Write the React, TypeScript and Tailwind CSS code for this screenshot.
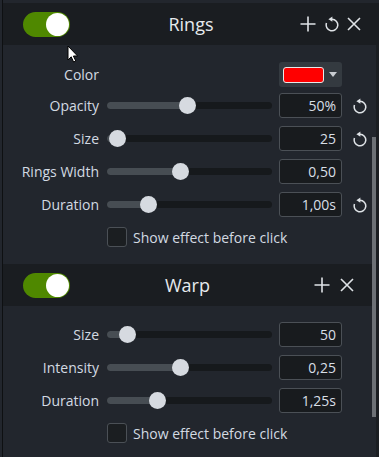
const font = { fontFamily: '"Open Sans", "Liberation Sans", sans-serif' };

function Toggle() {
  return (
    <div className="w-[47px] h-[25px] rounded-full bg-[#4f8800] flex items-center justify-end pr-px">
      <div className="w-[23px] h-[23px] rounded-full bg-white" />
    </div>
  );
}

function PlusIcon() {
  return (
    <svg width="16" height="16" viewBox="0 0 16 16" fill="none" stroke="#dfe3e7" strokeWidth="1.6">
      <path d="M8 0.5v15M0.5 8h15" />
    </svg>
  );
}

function CloseIcon() {
  return (
    <svg width="16" height="16" viewBox="0 0 16 16" fill="none" stroke="#dfe3e7" strokeWidth="1.6">
      <path d="M2 2l12 12M14 2L2 14" />
    </svg>
  );
}

function ResetIcon() {
  return (
    <svg width="16" height="16" viewBox="0 0 16 16" fill="none">
      <path d="M8 3.2A5.8 5.8 0 1 1 2.5 7.1" stroke="#dfe3e7" strokeWidth="1.5" />
      <path d="M4.4 3.2L8.4 0.6v5.2z" fill="#dfe3e7" />
    </svg>
  );
}

function Header({ title, reset }: { title: string; reset?: boolean }) {
  return (
    <div className="h-[42px] bg-[#1a1d21] grid grid-cols-[1fr_auto_1fr] items-center">
      <div className="pl-[20px]">
        <Toggle />
      </div>
      <div className="text-[18px] text-[#e6eaee]">{title}</div>
      <div className="flex items-center justify-end pr-[17px]">
        {reset ? (
          <>
            <PlusIcon />
            <div className="ml-[8px]">
              <ResetIcon />
            </div>
            <div className="ml-[6px]">
              <CloseIcon />
            </div>
          </>
        ) : (
          <>
            <PlusIcon />
            <div className="ml-[9px]">
              <CloseIcon />
            </div>
          </>
        )}
      </div>
    </div>
  );
}

function Slider({ pos }: { pos: number }) {
  // pos = thumb centre, px from the track's left edge
  return (
    <div className="relative w-[165px] h-[17px] flex items-center">
      <div className="w-full h-[7px] rounded-full bg-[#16191c] overflow-hidden">
        <div className="h-full bg-[#474d53]" style={{ width: pos }} />
      </div>
      <div
        className="absolute top-0 w-[17px] h-[17px] rounded-full bg-[#d6dae0]"
        style={{ left: pos - 8.5 }}
      />
    </div>
  );
}

function Row({ label, pos, value, reset }: { label: string; pos: number; value: string; reset?: boolean }) {
  return (
    <div className="flex items-center h-[25px]">
      <div className="w-[96px] text-right text-[14px] text-[#d3dae2] whitespace-nowrap">{label}</div>
      <div className="ml-[8px]">
        <Slider pos={pos} />
      </div>
      <div className="ml-[7px] w-[63px] h-[25px] rounded-[3px] border border-[#4b5056] bg-[#181b1e] flex items-center justify-end pr-[5px] text-[14px] text-[#d8dfe6]">
        {value}
      </div>
      <div className="ml-[10px] w-[16px] flex justify-center">{reset && <ResetIcon />}</div>
    </div>
  );
}

function Check() {
  return (
    <div className="flex items-center h-[20px] pl-[104px] text-[14px] text-[#d3dae2]">
      <div className="w-[20px] h-[20px] rounded-[3px] border border-[#4b5056] bg-[#1b1e21]" />
      <span className="ml-[6px]">Show effect before click</span>
    </div>
  );
}

export default function App() {
  return (
    <div className="w-[379px] h-[457px] bg-[#22262d] flex overflow-hidden relative" style={font}>
      <div className="w-[2px]" />
      <div className="w-px bg-[#0e1012]" />
      <div className="flex-1 flex flex-col pt-[3px]">
        <Header title="Rings" reset />
        <div className="flex flex-1">
          <div className="flex-1 flex flex-col">
            {/* Rings body */}
            <div className="flex items-center h-[25px] mt-[17px]">
              <div className="w-[96px] text-right text-[14px] text-[#d3dae2]">Color</div>
              <div className="ml-[180px] w-[63px] h-[25px] rounded-[3px] bg-[#343a40] flex items-center pl-[4px]">
                <div className="w-[41px] h-[16px] rounded-[3px] border border-[#e8e8e8] bg-[#ff0000]" />
                <svg className="ml-[5px]" width="8" height="5" viewBox="0 0 8 5">
                  <path d="M0 0h8L4 5z" fill="#c9cdd2" />
                </svg>
              </div>
            </div>
            <div className="flex flex-col gap-[8px] mt-[6px]">
              <Row label="Opacity" pos={80} value="50%" reset />
              <Row label="Size" pos={10} value="25" reset />
              <Row label="Rings Width" pos={73} value="0,50" />
              <Row label="Duration" pos={41} value="1,00s" reset />
            </div>
            <div className="mt-[10px]">
              <Check />
            </div>

            {/* Warp */}
            <div className="mt-[17px]">
              <Header title="Warp" />
            </div>
            <div className="flex flex-col gap-[8px] mt-[16px]">
              <Row label="Size" pos={20} value="50" />
              <Row label="Intensity" pos={73} value="0,25" />
              <Row label="Duration" pos={50} value="1,25s" />
            </div>
            <div className="mt-[10px]">
              <Check />
            </div>
          </div>
          {/* scrollbar */}
          <div className="w-[7px] flex flex-col border-r-[3px] border-[#1b1e22]">
            <div className="mt-[92px] h-[280px] w-[4px] bg-[#6d7176]" />
          </div>
        </div>
      </div>

      {/* mouse pointer */}
      <svg className="absolute left-[67px] top-[45px]" width="12" height="18" viewBox="0 0 12 18">
        <path d="M1 1v14l3.2-3.2 2.4 5.2 2.2-1-2.4-5H10.6z" fill="#ffffff" stroke="#000000" strokeWidth="1" />
      </svg>
    </div>
  );
}
